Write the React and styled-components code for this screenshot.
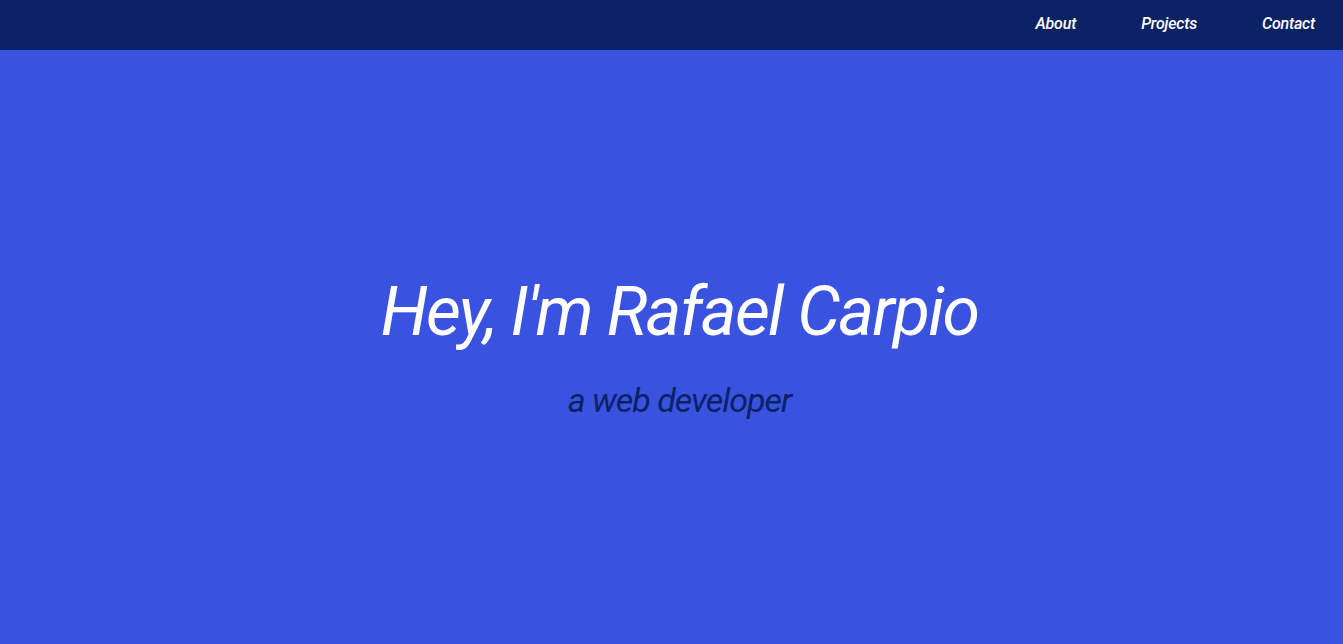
import React from "react"
import styled, { createGlobalStyle } from 'styled-components'

const GlobalStyle = createGlobalStyle`
    html, body {
        margin: 0;
        padding: 0;
        height: 100%;
        background-color: #3953e0;
        font-family: Roboto, "Liberation Sans", sans-serif;
    }
`

export default function App() {
    return (
        <>
            <GlobalStyle />
            <Nav>
                <NavLink href="#about">About</NavLink>
                <NavLink href="#projects">Projects</NavLink>
                <NavLink href="#contact">Contact</NavLink>
            </Nav>
            <Welcome>
                <Title>Hey, I'm Rafael Carpio</Title>
                <Subtitle>a web developer</Subtitle>
            </Welcome>
        </>
    )
}

const Nav = styled.nav`
    height: 50px;
    background-color: #0b2265;
    display: flex;
    justify-content: flex-end;
    align-items: center;
    gap: 65px;
    padding-right: 28px;
    box-sizing: border-box;
`

const NavLink = styled.a`
    color: white;
    text-decoration: none;
    font-style: italic;
    font-weight: 500;
    font-size: 16px;
    letter-spacing: -0.2px;
    margin-top: -3px;
`

const Welcome = styled.section`
    height: 594px;
    display: flex;
    flex-direction: column;
    justify-content: center;
    align-items: center;
    padding-left: 16px;
    padding-bottom: 1px;
    box-sizing: border-box;
`

const Title = styled.h1`
    margin: 0;
    color: white;
    font-size: 68px;
    font-weight: 400;
    font-style: italic;
    letter-spacing: -1.8px;
    line-height: 1.2;
`

const Subtitle = styled.p`
    margin: 27px 0 0;
    color: #0b2265;
    font-size: 34px;
    font-weight: 400;
    font-style: italic;
    letter-spacing: -1px;
    line-height: 1.2;
`
